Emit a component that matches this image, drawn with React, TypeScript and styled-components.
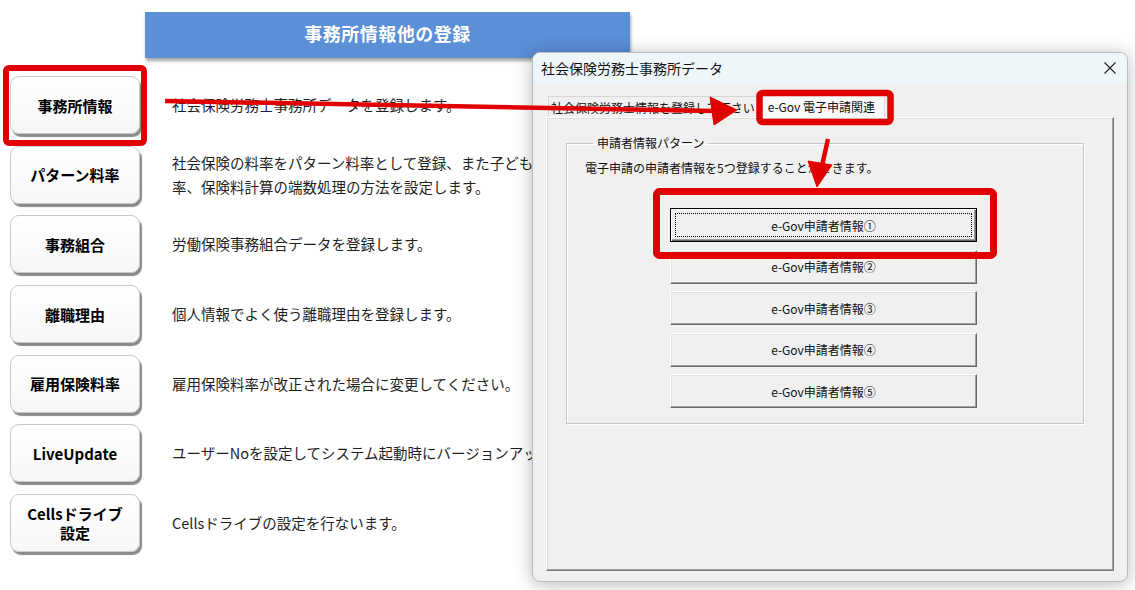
import React from "react";
import styled, { createGlobalStyle } from "styled-components";

const Global = createGlobalStyle`
  html, body { margin: 0; padding: 0; background: #ffffff; }
  body { font-family: "Noto Sans CJK JP", "Noto Sans", sans-serif; }
  * { box-sizing: border-box; }
`;

const Page = styled.div`
  position: relative;
  width: 1135px;
  height: 590px;
  overflow: hidden;
  background: #ffffff;
`;

const Main = styled.main`
  display: flex;
  flex-direction: column;
  padding: 12px 0 0 10px;
`;

const Banner = styled.h1`
  margin: 0 0 0 135px;
  width: 485px;
  height: 46px;
  padding-bottom: 5px;
  display: flex;
  align-items: center;
  justify-content: center;
  background: #5b8fd6;
  box-shadow: 1px 3px 3px rgba(0, 0, 0, 0.35);
  color: #ffffff;
  font-family: "Noto Sans CJK JP", sans-serif;
  font-size: 18px;
  font-weight: 700;
  letter-spacing: 0.5px;
`;

const MenuList = styled.div`
  display: flex;
  flex-direction: column;
  gap: 11.7px;
  margin-top: 18px;
`;

const Row = styled.div`
  display: flex;
  align-items: center;
  gap: 32px;
`;

const MenuButton = styled.button`
  flex-shrink: 0;
  width: 130px;
  height: 58px;
  display: flex;
  flex-direction: column;
  align-items: center;
  justify-content: center;
  border: 1px solid #c9c9c9;
  border-radius: 9px;
  background: linear-gradient(#ffffff, #f7f7f7);
  box-shadow: 2px 3px 1px #8a8a8a;
  color: #000000;
  font-family: "Noto Sans CJK JP", sans-serif;
  font-size: 15px;
  font-weight: 700;
  line-height: 19px;
  padding: 0;
`;

const LabelLine = styled.span`
  display: block;
  line-height: 19px;
`;

const Desc = styled.p`
  margin: 0;
  color: #1e1e1e;
  font-size: 14.5px;
  line-height: 24px;
  white-space: nowrap;
`;

const Dialog = styled.section`
  position: absolute;
  left: 532px;
  top: 52px;
  width: 596px;
  height: 530px;
  display: flex;
  flex-direction: column;
  background: #f0f0f0;
  border: 1px solid #bcbcbc;
  border-radius: 8px;
  box-shadow: 0 2px 18px rgba(0, 0, 0, 0.28);
  overflow: hidden;
`;

const TitleBar = styled.header`
  height: 30px;
  display: flex;
  align-items: center;
  justify-content: space-between;
  padding: 0 10px 0 8px;
  background: #eef6f9;
  color: #111111;
  font-size: 14px;
`;

const CloseIcon = styled.svg`
  width: 14px;
  height: 14px;
`;

const DialogBody = styled.div`
  flex: 1;
  display: flex;
  flex-direction: column;
  padding: 10px 13px 10px 13px;
`;

const TabStrip = styled.div`
  display: flex;
  align-items: flex-end;
  height: 24px;
  padding-left: 2px;
`;

const Tab = styled.div<{ $active?: boolean }>`
  height: ${(p) => (p.$active ? "25px" : "21px")};
  margin-bottom: ${(p) => (p.$active ? "-1px" : "0")};
  padding: 0 ${(p) => (p.$active ? "9px" : "2px")};
  display: flex;
  align-items: center;
  border: 1px solid #d6d6d6;
  border-bottom: none;
  background: ${(p) => (p.$active ? "#f9f9f9" : "#f0f0f0")};
  color: #111111;
  font-size: 12px;
  white-space: nowrap;
  position: relative;
`;

const TabPanel = styled.div`
  flex: 1;
  display: flex;
  flex-direction: column;
  padding: 17px 29px 0 19px;
  border: 1px solid;
  border-color: #ffffff #7a7a7a #7a7a7a #ffffff;
  box-shadow: inset -1px -1px 0 #a0a0a0, inset 1px 1px 0 #dcdcdc;
`;

const Group = styled.fieldset`
  margin: 0;
  padding: 9px 16px 15px 18px;
  border: 1px solid #c6c6c6;
  box-shadow: inset 1px 1px 0 #ffffff, 1px 1px 0 #ffffff;
  display: flex;
  flex-direction: column;
`;

const Legend = styled.legend`
  margin-left: 8px;
  padding: 0 4px;
  font-size: 12px;
  line-height: 16px;
  color: #111111;
`;

const Note = styled.p`
  margin: 0;
  font-size: 12px;
  line-height: 16px;
  color: #111111;
`;

const ButtonStack = styled.div`
  display: flex;
  flex-direction: column;
  gap: 7.5px;
  margin: 32px 0 0 85px;
`;

const WinButton = styled.button<{ $default?: boolean }>`
  position: relative;
  width: 307px;
  height: 34px;
  padding: 0;
  background: #f0f0f0;
  border: 1px solid;
  border-color: ${(p) =>
    p.$default ? "#000000" : "#ffffff #696969 #696969 #ffffff"};
  box-shadow: ${(p) =>
    p.$default
      ? "inset 1px 1px 0 #ffffff, inset -1px -1px 0 #696969, inset -2px -2px 0 #a0a0a0"
      : "inset -1px -1px 0 #a0a0a0, inset 1px 1px 0 #e3e3e3"};
  color: #111111;
  font-family: "Noto Sans CJK JP", sans-serif;
  font-size: 12px;

  &::after {
    content: "";
    display: ${(p) => (p.$default ? "block" : "none")};
    position: absolute;
    inset: 4px;
    border: 1px dotted #000000;
  }
`;

const Annotations = styled.svg`
  position: absolute;
  left: 0;
  top: 0;
  width: 1135px;
  height: 590px;
  pointer-events: none;
`;

const menu: { label: React.ReactNode; desc: React.ReactNode }[] = [
  { label: "事務所情報", desc: "社会保険労務士事務所データを登録します。" },
  {
    label: "パターン料率",
    desc: (
      <>
        社会保険の料率をパターン料率として登録、また子ども・子育て拠出金
        <br />
        率、保険料計算の端数処理の方法を設定します。
      </>
    ),
  },
  { label: "事務組合", desc: "労働保険事務組合データを登録します。" },
  { label: "離職理由", desc: "個人情報でよく使う離職理由を登録します。" },
  { label: "雇用保険料率", desc: "雇用保険料率が改正された場合に変更してください。" },
  {
    label: "LiveUpdate",
    desc: "ユーザーNoを設定してシステム起動時にバージョンアップを確認します。",
  },
  {
    label: (
      <>
        <LabelLine>Cellsドライブ</LabelLine>
        <LabelLine>設定</LabelLine>
      </>
    ),
    desc: "Cellsドライブの設定を行ないます。",
  },
];

const egov = ["①", "②", "③", "④", "⑤"];

export default function App() {
  return (
    <Page>
      <Global />
      <Main>
        <Banner>事務所情報他の登録</Banner>
        <MenuList>
          {menu.map((m, i) => (
            <Row key={i}>
              <MenuButton>{m.label}</MenuButton>
              <Desc>{m.desc}</Desc>
            </Row>
          ))}
        </MenuList>
      </Main>

      <Dialog>
        <TitleBar>
          <span>社会保険労務士事務所データ</span>
          <CloseIcon viewBox="0 0 14 14">
            <path d="M1.5 1.5 L12.5 12.5 M12.5 1.5 L1.5 12.5" stroke="#222" strokeWidth="1.1" fill="none" />
          </CloseIcon>
        </TitleBar>
        <DialogBody>
          <TabStrip>
            <Tab>社会保険労務士情報を登録して下さい</Tab>
            <Tab $active>e-Gov 電子申請関連</Tab>
          </TabStrip>
          <TabPanel>
            <Group>
              <Legend>申請者情報パターン</Legend>
              <Note>電子申請の申請者情報を5つ登録することができます。</Note>
              <ButtonStack>
                {egov.map((n, i) => (
                  <WinButton key={n} $default={i === 0}>
                    e-Gov申請者情報{n}
                  </WinButton>
                ))}
              </ButtonStack>
            </Group>
          </TabPanel>
        </DialogBody>
      </Dialog>

      <Annotations viewBox="0 0 1135 590">
        <g fill="none" stroke="#e00000" strokeLinejoin="round">
          <rect x="6" y="68" width="138" height="75" rx="3" strokeWidth="6" />
          <rect x="759.5" y="93" width="131" height="29" rx="3" strokeWidth="6.5" />
          <rect x="656.5" y="191.5" width="337" height="64" rx="3" strokeWidth="7" />
        </g>
        <g fill="#e00000" stroke="#e00000">
          <line x1="165" y1="101" x2="716" y2="111" strokeWidth="4.5" />
          <polygon points="737,110 710,97 714,125" strokeWidth="1" />
          <line x1="828" y1="139" x2="822" y2="166" strokeWidth="4.5" />
          <polygon points="817,187 808,161 832,165" strokeWidth="1" />
        </g>
      </Annotations>
    </Page>
  );
}
